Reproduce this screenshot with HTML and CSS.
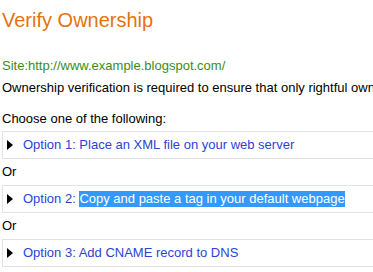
FILE: index.html
```html
<!DOCTYPE html>
<html>
<head>
<meta charset="utf-8">
<title>Verify Ownership</title>
<link rel="stylesheet" href="styles.css">
</head>
<body>
<div class="page">
  <h2 class="title">Verify Ownership</h2>
  <p class="site">Site:http://www.example.blogspot.com/</p>
  <p class="intro">Ownership verification is required to ensure that only rightful owners can access site data.</p>
  <p class="choose">Choose one of the following:</p>
  <div class="option"><span class="arrow"></span><span class="label">Option 1: Place an XML file on your web server</span></div>
  <p class="or">Or</p>
  <div class="option"><span class="arrow"></span><span class="label">Option 2: <span class="sel">Copy and paste a tag in your default webpage</span></span></div>
  <p class="or">Or</p>
  <div class="option"><span class="arrow"></span><span class="label">Option 3: Add CNAME record to DNS</span></div>
</div>
</body>
</html>
```
FILE: styles.css
```css
html, body {
  margin: 0;
  padding: 0;
  overflow: hidden;
  background: #fff;
}
.page {
  width: 640px;
  padding: 8px 0 0 2px;
  font-family: "Liberation Sans", Arial, sans-serif;
  font-size: 13px;
  line-height: 16px;
  color: #000;
  white-space: nowrap;
}
.title {
  margin: 1px 0 0 0;
  font-size: 20px;
  line-height: 23px;
  font-weight: normal;
  color: #e5720e;
}
.site {
  margin: 26px 0 0 0;
  color: #3d8b22;
}
.intro {
  margin: 6px 0 0 0;
}
.choose {
  margin: 15px 0 0 0;
}
.option {
  margin-top: 5px;
  border: 1px solid #e2e2e2;
  border-right: none;
  padding: 5px 0 5px 4px;
  line-height: 16px;
}
.choose + .option {
  margin-top: 4px;
}
.arrow {
  display: inline-block;
  width: 0;
  height: 0;
  border-left: 6px solid #000;
  border-top: 5px solid transparent;
  border-bottom: 5px solid transparent;
  margin-right: 10px;
  vertical-align: -1px;
}
.label {
  color: #2a44d4;
}
.sel {
  display: inline-block;
  background: #3399ff;
  color: #fff;
  line-height: 16px;
}
.or {
  margin: 5px 0 0 0;
  line-height: 16px;
}
```
